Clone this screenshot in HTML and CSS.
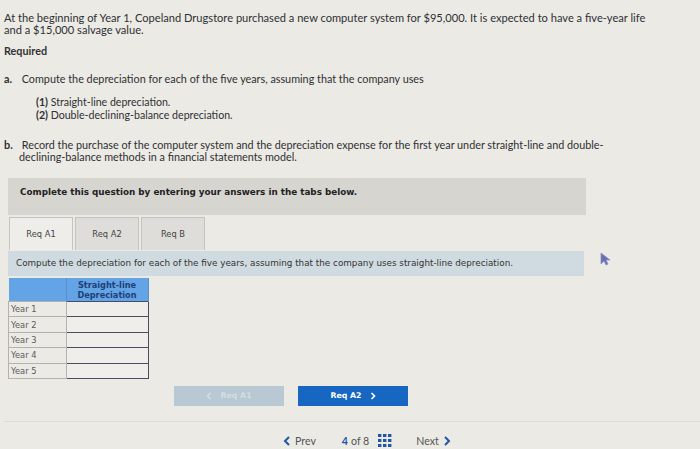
FILE: index.html
```html
<!DOCTYPE html>
<html>
<head>
<meta charset="utf-8">
<link rel="stylesheet" href="styles.css">
</head>
<body>
<div class="page">
  <p class="intro">At the beginning of Year 1, Copeland Drugstore purchased a new computer system for $95,000. It is expected to have a five-year life and a $15,000 salvage value.</p>
  <p class="required">Required</p>
  <p class="item"><span class="lbl">a.</span> Compute the depreciation for each of the five years, assuming that the company uses</p>
  <div class="sub">
    <p><b>(1)</b> Straight-line depreciation.</p>
    <p><b>(2)</b> Double-declining-balance depreciation.</p>
  </div>
  <p class="item itemb"><span class="lbl">b.</span> Record the purchase of the computer system and the depreciation expense for the first year under straight-line and double-declining-balance methods in a financial statements model.</p>

  <div class="complete">Complete this question by entering your answers in the tabs below.</div>

  <div class="tabs">
    <div class="tab active">Req A1</div>
    <div class="tab">Req A2</div>
    <div class="tab">Req B</div>
  </div>
  <div class="instr">Compute the depreciation for each of the five years, assuming that the company uses straight-line depreciation.</div>
  <span class="cursor"><svg width="12" height="14" viewBox="0 0 12 14"><path d="M1 1 L1 12 L4 9 L6 13 L8 12 L6 8 L10 8 Z" fill="#6b6fb0" stroke="#8d90c8" stroke-width="0.8"/></svg></span>

  <table class="dep">
    <tr class="hd"><th class="blank"></th><th>Straight-line<br>Depreciation</th></tr>
    <tr><td class="yr">Year 1</td><td class="in"></td></tr>
    <tr><td class="yr">Year 2</td><td class="in"></td></tr>
    <tr><td class="yr">Year 3</td><td class="in"></td></tr>
    <tr><td class="yr">Year 4</td><td class="in"></td></tr>
    <tr><td class="yr">Year 5</td><td class="in"></td></tr>
  </table>

  <div class="btns">
    <div class="btn prev"><svg width="6" height="8" viewBox="0 0 6 8"><path d="M4.5 1 L1.5 4 L4.5 7" fill="none" stroke="#d3dde4" stroke-width="1.5"/></svg>&nbsp;&nbsp; Req A1</div>
    <div class="btn next">Req A2 &nbsp;&nbsp;<svg width="6" height="8" viewBox="0 0 6 8"><path d="M1.5 1 L4.5 4 L1.5 7" fill="none" stroke="#fff" stroke-width="1.6"/></svg></div>
  </div>

  <div class="nav">
    <div class="navitem"><svg width="8" height="10" viewBox="0 0 8 10"><path d="M6 1 L2 5 L6 9" fill="none" stroke="#1f56a6" stroke-width="2"/></svg> Prev</div>
    <div class="navitem count"><span class="cur">4</span> of 8
      <svg width="14" height="13" viewBox="0 0 14 13" class="grid">
        <g fill="#1f56a6">
          <rect x="0" y="0" width="3.4" height="3"/><rect x="5" y="0" width="3.4" height="3"/><rect x="10" y="0" width="3.4" height="3"/>
          <rect x="0" y="5" width="3.4" height="3"/><rect x="5" y="5" width="3.4" height="3"/><rect x="10" y="5" width="3.4" height="3"/>
          <rect x="0" y="10" width="3.4" height="3"/><rect x="5" y="10" width="3.4" height="3"/><rect x="10" y="10" width="3.4" height="3"/>
        </g>
      </svg>
    </div>
    <div class="navitem">Next <svg width="8" height="10" viewBox="0 0 8 10"><path d="M2 1 L6 5 L2 9" fill="none" stroke="#1f56a6" stroke-width="2"/></svg></div>
  </div>
</div>
</body>
</html>
```
FILE: styles.css
```css
html, body { margin: 0; padding: 0; }
body {
  background: #ebeae5;
  font-family: "Lato", "Open Sans", sans-serif;
  color: #2f3033;
  width: 700px;
  height: 449px;
  overflow: hidden;
}
.page { padding: 12px 0 0 4px; position: relative; }
p { margin: 0; }
.intro { font-size: 11.1px; line-height: 11.5px; width: 660px; }
.required { font-weight: bold; font-size: 10.8px; line-height: 12px; margin-top: 10px; color: #333; }
.item { font-size: 10.8px; line-height: 12px; margin-top: 16px; padding-left: 15px; text-indent: -15px; }
.item .lbl { font-weight: bold; display: inline-block; width: 15px; text-indent: 0; }
.sub { margin-top: 11px; padding-left: 32px; font-size: 10.6px; line-height: 13px; }
.itemb { margin-top: 17px; width: 600px; }
.complete {
  margin: 15px 0 0 4px;
  width: 566px; height: 37px;
  padding-left: 12px;
  background: #d6d5d0;
  font-family: "DejaVu Sans", Verdana, sans-serif;
  font-weight: bold; font-size: 8.8px;
  line-height: 29px;
  color: #222;
}
.tabs { display: flex; margin: 2px 0 0 5px; gap: 2px; }
.tab {
  width: 62px; height: 32px;
  border: 1px solid #c4c3bf;
  border-bottom: none;
  background: #deddd9;
  font-family: "DejaVu Sans", Verdana, sans-serif;
  font-size: 8.3px; color: #444;
  display: flex; align-items: center; justify-content: center;
}
.tab.active { background: #eeede9; }
.instr {
  margin: 1px 0 0 4px;
  width: 568px; height: 25px;
  padding-left: 8px;
  background: #cfdbe0;
  font-family: "DejaVu Sans", Verdana, sans-serif;
  font-size: 8.8px; line-height: 25px; color: #333;
}
.cursor { position: absolute; left: 600px; top: 250px; }
.dep { border-collapse: collapse; margin: 2px 0 0 4px; }
.dep th { background: #63a4e6; height: 23px; padding: 0; font-family: "DejaVu Sans", Verdana, sans-serif; font-size: 8.2px; color: #1f3f78; font-weight: bold; line-height: 10px; border-right: 1px solid #5b8fc8; }
.dep th.blank { width: 57px; }
.dep th:last-child { width: 81px; }
.dep td { height: 14.4px; padding: 0; }
.dep td.yr { border: 1px solid #b3b2ae; font-family: "DejaVu Sans", Verdana, sans-serif; font-size: 8.3px; color: #5a5a5a; padding-left: 2px; background: #ebeae5; }
.dep td.in { border: 1.5px solid #4b4b63; background: #efeeea; }
.btns { display: flex; gap: 14px; margin: 7px 0 0 170px; }
.btn {
  width: 110px; height: 20px;
  display: flex; align-items: center; justify-content: center;
  font-family: "DejaVu Sans", Verdana, sans-serif; font-weight: bold; font-size: 7.8px;
}
.btn.prev { background: #b9c9d3; color: #d3dde4; }
.btn.next { background: #1766c2; color: #fff; }
.nav {
  margin-top: 15px;
  border-top: 1px solid #dcdbd6;
  display: flex; padding-left: 278px; height: 38px; align-items: center;
  font-size: 10.6px; color: #555;
}
.navitem { display: flex; align-items: center; gap: 4px; padding: 0 1px; }
.count { margin-left: 24px; gap: 3px; }
.count .cur { color: #1f56a6; font-weight: bold; }
.grid { margin-left: 6px; }
.nav .navitem:last-child { margin-left: 22px; }
```
